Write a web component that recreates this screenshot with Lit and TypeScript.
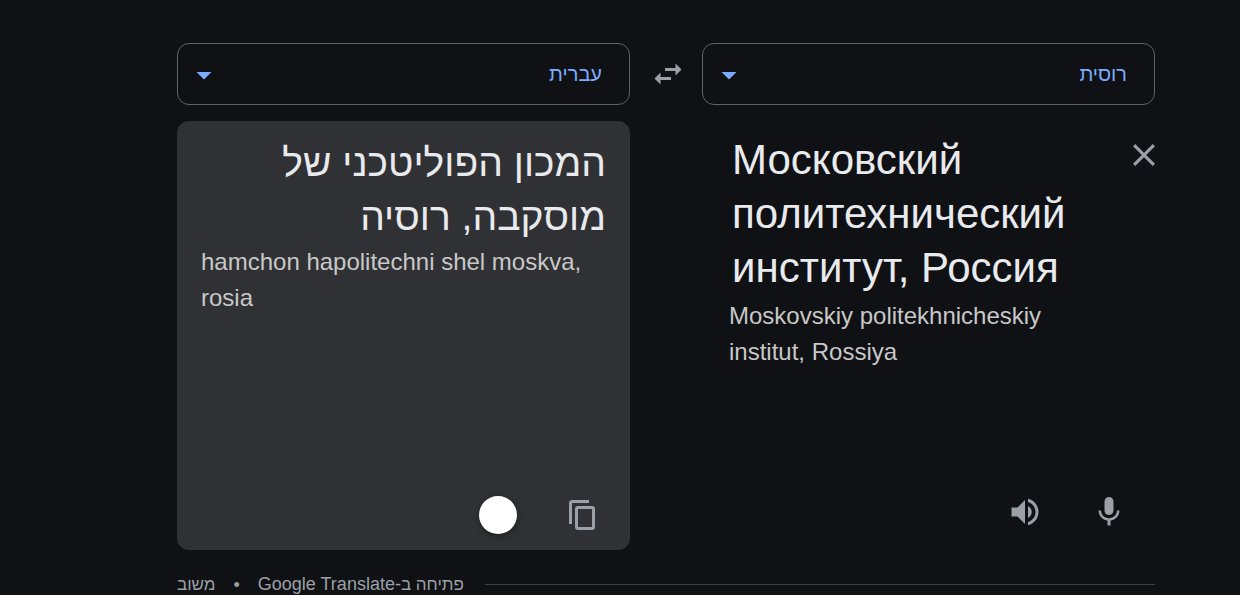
import { LitElement, html, css, svg } from "lit";
import { customElement, property } from "lit/decorators.js";

const paths = {
  swap: svg`<path d="M6.99 11L3 15l3.99 4v-3H14v-2H6.99v-3zM21 9l-3.99-4v3H10v2h7.01v3L21 9z"/>`,
  arrow: svg`<path d="M7 10l5 5 5-5z"/>`,
  volume: svg`<path d="M3 9v6h4l5 5V4L7 9H3zm13.5 3c0-1.77-1.02-3.29-2.5-4.03v8.05c1.48-.73 2.5-2.25 2.5-4.02zM14 3.23v2.06c2.89.86 5 3.54 5 6.71s-2.11 5.85-5 6.71v2.06c4.01-.91 7-4.49 7-8.77s-2.99-7.86-7-8.77z"/>`,
  mic: svg`<path d="M12 14c1.66 0 2.99-1.34 2.99-3L15 5c0-1.66-1.34-3-3-3S9 3.34 9 5v6c0 1.66 1.34 3 3 3zm5.3-3c0 3-2.54 5.1-5.3 5.1S6.7 14 6.7 11H5c0 3.41 2.72 6.23 6 6.72V21h2v-3.28c3.28-.48 6-3.3 6-6.72h-1.7z"/>`,
};

@customElement("language-picker")
export class LanguagePicker extends LitElement {
  @property() label = "";
  @property() value = "";

  static styles = css`
    :host {
      display: block;
    }
    .box {
      display: grid;
      align-items: center;
    }
    .select,
    .arrow {
      grid-area: 1 / 1;
    }
    .select {
      appearance: none;
      width: 100%;
      height: 62px;
      padding: 0 27px;
      border: 1px solid #5f6368;
      border-radius: 12px;
      background: transparent;
      color: #7cacff;
      font: 20px/24px "Liberation Sans", Arial, sans-serif;
    }
    .arrow {
      justify-self: end;
      width: 36px;
      height: 36px;
      margin-top: 2px;
      margin-inline-end: 9px;
      fill: #7cacff;
      pointer-events: none;
    }
  `;

  render() {
    return html`
      <div class="box">
        <select class="select" aria-label=${this.label}>
          <option>${this.value}</option>
        </select>
        <svg class="arrow" viewBox="0 0 24 24" aria-hidden="true">${paths.arrow}</svg>
      </div>
    `;
  }
}

@customElement("app-root")
export class AppRoot extends LitElement {
  static styles = css`
    :host {
      display: block;
      box-sizing: border-box;
      min-height: 100vh;
      padding: 43px 85px 0 177px;
      background: #101114;
      color: #e8eaed;
      font-family: "Liberation Sans", Arial, sans-serif;
    }
    .board {
      display: grid;
      grid-template-columns: minmax(0, 1fr) 72px minmax(0, 1fr);
      row-gap: 16px;
    }
    button {
      display: grid;
      place-items: center;
      padding: 0;
      border: 0;
      background: none;
      cursor: pointer;
    }
    .icon {
      width: 36px;
      height: 36px;
      fill: #9aa0a6;
    }
    .swap {
      height: 62px;
      padding-left: 4px;
    }
    .panel {
      display: flex;
      flex-direction: column;
      box-sizing: border-box;
      min-height: 429px;
    }
    .source {
      grid-column: 1;
      padding: 12px 0 14px 27px;
    }
    .result {
      grid-column: 3;
      padding: 15px 24px 11px;
      border-radius: 12px;
      background: #303134;
    }
    .entry {
      display: flex;
      align-items: flex-start;
      justify-content: space-between;
      gap: 24px;
    }
    .field {
      flex: 1;
      min-width: 0;
      height: 162px;
      padding: 0 3px;
      border: 0;
      outline: 0;
      resize: none;
      overflow: hidden;
      background: transparent;
      color: inherit;
      font: 42px/54px "Liberation Sans", Arial, sans-serif;
    }
    .close {
      margin-top: 11px;
    }
    .close .icon {
      width: 22px;
      height: 22px;
    }
    .translation {
      margin: 0;
      font-size: 39px;
      line-height: 54px;
    }
    .latin {
      margin: 0;
      color: #c8c8c8;
      font-size: 24px;
      line-height: 36px;
    }
    .source .latin {
      margin-top: 3px;
      padding-right: 48px;
    }
    .actions {
      display: flex;
      gap: 36px;
      margin-top: auto;
    }
    .source .actions {
      padding-inline-start: 22px;
    }
    .action {
      width: 48px;
      height: 48px;
    }
    .disc {
      width: 38px;
      height: 38px;
      border-radius: 50%;
      background: #fff;
      box-shadow: 0 2px 6px rgba(0, 0, 0, 0.4);
    }
    .copy {
      width: 26px;
      height: 30px;
      fill: none;
      stroke: #9aa0a6;
      stroke-width: 3;
    }
    .footer {
      display: flex;
      align-items: center;
      gap: 18px;
      margin-top: 24px;
      color: #9aa0a6;
      font-size: 18px;
      line-height: 20px;
    }
    .rule {
      flex: 1;
      height: 1px;
      margin: 0 0 0 3px;
      border: 0;
      background: #3c4043;
    }
    .link {
      color: inherit;
      text-decoration: none;
    }
    .hebrew {
      font-size: 17px;
    }
  `;

  render() {
    return html`
      <main dir="rtl">
        <div class="board">
          <language-picker label="שפת המקור" value="רוסית"></language-picker>
          <button class="swap" aria-label="החלפת שפות">
            <svg class="icon" viewBox="0 0 24 24">${paths.swap}</svg>
          </button>
          <language-picker label="שפת היעד" value="עברית"></language-picker>

          <section class="panel source">
            <div class="entry" dir="ltr">
              <textarea class="field" lang="ru" rows="3" spellcheck="false" aria-label="טקסט לתרגום"
                .value=${"Московский политехнический институт, Россия"}></textarea>
              <button class="close" aria-label="ניקוי">
                <svg class="icon" viewBox="5 5 14 14">
                  <path d="M19 6.41L17.59 5 12 10.59 6.41 5 5 6.41 10.59 12 5 17.59 6.41 19 12 13.41 17.59 19 19 17.59 13.41 12z"/>
                </svg>
              </button>
            </div>
            <p class="latin" dir="ltr">Moskovskiy politekhnicheskiy institut, Rossiya</p>
            <div class="actions">
              <button class="action" aria-label="הקלטה">
                <svg class="icon" viewBox="0 0 24 24">${paths.mic}</svg>
              </button>
              <button class="action" aria-label="השמעה">
                <svg class="icon" viewBox="0 0 24 24">${paths.volume}</svg>
              </button>
            </div>
          </section>

          <section class="panel result">
            <p class="translation" lang="he">המכון הפוליטכני של מוסקבה, רוסיה</p>
            <p class="latin" dir="ltr">hamchon hapolitechni shel moskva, rosia</p>
            <div class="actions">
              <button class="action" aria-label="העתקה">
                <svg class="copy" viewBox="0 0 26 30">
                  <path d="M20 1.5H3a1.5 1.5 0 0 0-1.5 1.5v21"/>
                  <rect x="7.5" y="7.5" width="17" height="21" rx="1.5"/>
                </svg>
              </button>
              <button class="action" aria-label="השמעת התרגום"><span class="disc"></span></button>
            </div>
          </section>
        </div>

        <footer class="footer">
          <hr class="rule" />
          <a class="link" href="#"><span class="hebrew">פתיחה ב</span>-Google Translate</a>
          <span>•</span>
          <a class="link hebrew" href="#">משוב</a>
        </footer>
      </main>
    `;
  }
}
